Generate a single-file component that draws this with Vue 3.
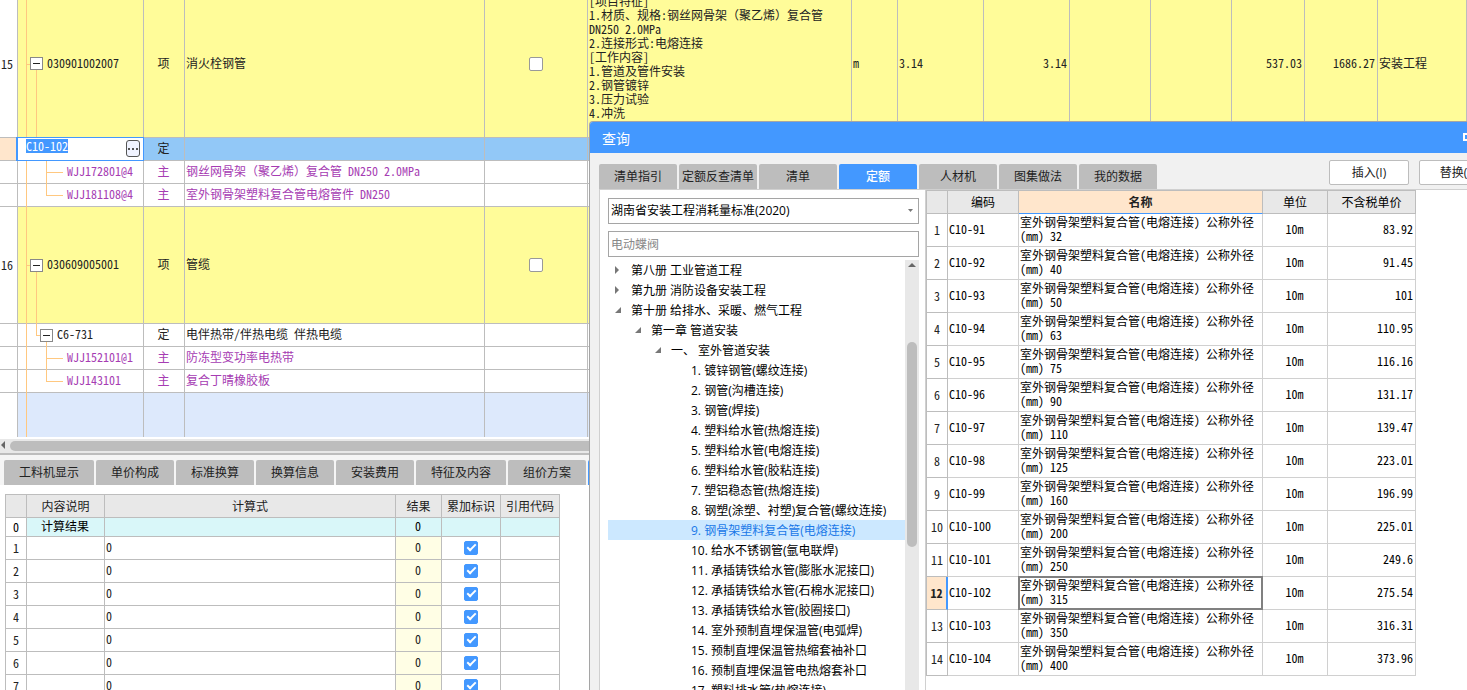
<script setup>
import { ref, onMounted } from 'vue'

const desc = [
  '[项目特征]',
  '1.材质、规格:钢丝网骨架（聚乙烯）复合管',
  'DN250 2.0MPa',
  '2.连接形式:电熔连接',
  '[工作内容]',
  '1.管道及管件安装',
  '2.钢管镀锌',
  '3.压力试验',
  '4.冲洗'
]

const rows = [
  { kind: 'item', size: 'first', no: '15', code: '030901002007', type: '项', name: '消火栓钢管', check: true, desc, unit: 'm', expr: '3.14', qty: '3.14', price: '537.03', total: '1686.27', major: '安装工程' },
  { kind: 'edit', type: '定', name: '' },
  { kind: 'mat', code: 'WJJ172801@4', type: '主', name: '钢丝网骨架（聚乙烯）复合管 DN250 2.0MPa' },
  { kind: 'mat', last: true, code: 'WJJ181108@4', type: '主', name: '室外钢骨架塑料复合管电熔管件 DN250' },
  { kind: 'item', size: 'tall', no: '16', code: '030609005001', type: '项', name: '管缆', check: true },
  { kind: 'quota', code: 'C6-731', type: '定', name: '电伴热带/伴热电缆 伴热电缆' },
  { kind: 'mat', code: 'WJJ152101@1', type: '主', name: '防冻型变功率电热带' },
  { kind: 'mat', last: true, code: 'WJJ143101', type: '主', name: '复合丁晴橡胶板' },
  { kind: 'blank', size: 'tail' }
]

// Full-width brackets keep their own width inside half-width text.
const parts = (s) => s.split(/([（）])/).filter(Boolean).map((text) => ({ text, wide: /[（）]/.test(text) }))

const detailTabs = ['工料机显示', '单价构成', '标准换算', '换算信息', '安装费用', '特征及内容', '组价方案', '工程量明细']
const queryTabs = ['清单指引', '定额反查清单', '清单', '定额', '人材机', '图集做法', '我的数据']
const activeTab = ref('定额')

const tree = [
  { level: 0, text: '第八册 工业管道工程', open: false },
  { level: 0, text: '第九册 消防设备安装工程', open: false },
  { level: 0, text: '第十册 给排水、采暖、燃气工程', open: true },
  { level: 1, text: '第一章 管道安装', open: true },
  { level: 2, text: '一、 室外管道安装', open: true },
  ...[
    '1. 镀锌钢管(螺纹连接)',
    '2. 钢管(沟槽连接)',
    '3. 钢管(焊接)',
    '4. 塑料给水管(热熔连接)',
    '5. 塑料给水管(电熔连接)',
    '6. 塑料给水管(胶粘连接)',
    '7. 塑铝稳态管(热熔连接)',
    '8. 钢塑(涂塑、衬塑)复合管(螺纹连接)',
    '9. 钢骨架塑料复合管(电熔连接)',
    '10. 给水不锈钢管(氩电联焊)',
    '11. 承插铸铁给水管(膨胀水泥接口)',
    '12. 承插铸铁给水管(石棉水泥接口)',
    '13. 承插铸铁给水管(胶圈接口)',
    '14. 室外预制直埋保温管(电弧焊)',
    '15. 预制直埋保温管热缩套袖补口',
    '16. 预制直埋保温管电热熔套补口',
    '17. 塑料排水管(热熔连接)'
  ].map((text) => ({ level: 3, text, leaf: true }))
]
const selectedNode = ref('9. 钢骨架塑料复合管(电熔连接)')

const quotas = [
  [32, '83.92'], [40, '91.45'], [50, '101'], [63, '110.95'], [75, '116.16'], [90, '131.17'], [110, '139.47'],
  [125, '223.01'], [160, '196.99'], [200, '225.01'], [250, '249.6'], [315, '275.54'], [350, '316.31'], [400, '373.96']
].map(([dia, price], i) => ({
  no: i + 1,
  code: `C10-${91 + i}`,
  name: `室外钢骨架塑料复合管(电熔连接) 公称外径(mm) ${dia}`,
  price
}))
const currentNo = 12

const codeInput = ref('C10-102')
const editor = ref(null)
const keyword = ref('')

onMounted(() => {
  const el = Array.isArray(editor.value) ? editor.value[0] : editor.value
  el?.focus({ preventScroll: true })
  el?.select()
})
</script>

<template>
  <div class="app">
    <section class="bill">
      <table class="bill-grid">
        <colgroup>
          <col class="w-no"><col class="w-code"><col class="w-type"><col class="w-name"><col class="w-check">
          <col class="w-desc"><col class="w-unit"><col class="w-expr"><col class="w-expr"><col class="w-mid">
          <col class="w-mid"><col class="w-price"><col class="w-price"><col>
        </colgroup>
        <tbody>
          <tr v-for="(r, i) in rows" :key="i" :class="[r.kind, r.size]">
            <td class="no">{{ r.no }}</td>
            <td class="code">
              <svg v-if="r.kind !== 'edit'" class="lines" aria-hidden="true">
                <line x1="8.5" y1="0" x2="8.5" y2="100%" />
                <template v-if="r.kind === 'item'">
                  <line x1="8" y1="50%" x2="13" y2="50%" />
                  <line x1="18.5" y1="50%" x2="18.5" y2="100%" />
                </template>
                <template v-if="r.kind === 'quota'">
                  <line x1="18.5" y1="0" x2="18.5" y2="50%" />
                  <line x1="18" y1="50%" x2="23" y2="50%" />
                  <line x1="28.5" y1="50%" x2="28.5" y2="100%" />
                </template>
                <template v-if="r.kind === 'mat'">
                  <line x1="28.5" y1="0" x2="28.5" :y2="r.last ? '50%' : '100%'" />
                  <line x1="28" y1="50%" x2="45" y2="50%" />
                </template>
              </svg>
              <div v-if="r.kind === 'edit'" class="editor">
                <input ref="editor" v-model="codeInput" aria-label="编码">
                <button type="button" aria-label="选择">
                  <svg width="10" height="2" viewBox="0 0 10 2"><path d="M0 0h2v2H0zM4 0h2v2H4zM8 0h2v2H8z" fill="#555" /></svg>
                </button>
              </div>
              <div v-else class="code-text">
                <button v-if="r.kind === 'item' || r.kind === 'quota'" type="button" class="toggle" aria-label="折叠">
                  <svg width="11" height="11" viewBox="0 0 11 11"><path d="M2 5h7v1H2z" fill="#222" /></svg>
                </button>
                <span>{{ r.code }}</span>
              </div>
            </td>
            <td class="center">{{ r.type }}</td>
            <td><span v-for="(p, k) in parts(r.name || '')" :key="k" :class="{ wide: p.wide }">{{ p.text }}</span></td>
            <td class="center tick"><input v-if="r.check" type="checkbox" class="box" aria-label="选中"></td>
            <td class="desc">
              <div v-for="line in r.desc" :key="line"><span v-for="(p, k) in parts(line)" :key="k" :class="{ wide: p.wide }">{{ p.text }}</span></div>
            </td>
            <td>{{ r.unit }}</td>
            <td>{{ r.expr }}</td>
            <td class="right">{{ r.qty }}</td>
            <td></td>
            <td></td>
            <td class="right">{{ r.price }}</td>
            <td class="right">{{ r.total }}</td>
            <td>{{ r.major }}</td>
          </tr>
        </tbody>
      </table>
    </section>

    <div class="hscroll">
      <svg width="10" height="12" viewBox="0 0 10 12"><path d="M5 2v8L1 6z" fill="#666" /></svg>
      <div class="hthumb"></div>
    </div>

    <nav class="detail-tabs">
      <button v-for="t in detailTabs" :key="t" type="button" class="tab" :class="{ on: t === '工程量明细' }">{{ t }}</button>
    </nav>

    <section class="detail">
      <table class="calc">
        <colgroup><col class="c-no"><col class="c-note"><col class="c-expr"><col class="c-res"><col class="c-flag"><col class="c-flag"></colgroup>
        <thead>
          <tr><th></th><th>内容说明</th><th>计算式</th><th>结果</th><th>累加标识</th><th>引用代码</th></tr>
        </thead>
        <tbody>
          <tr class="sum"><td class="center n">0</td><td class="center">计算结果</td><td></td><td class="center">0</td><td></td><td></td></tr>
          <tr v-for="n in 7" :key="n">
            <td class="center n">{{ n }}</td>
            <td></td>
            <td>0</td>
            <td class="center res">0</td>
            <td class="center tick"><input type="checkbox" class="box" checked :aria-label="`累加标识 ${n}`"></td>
            <td></td>
          </tr>
        </tbody>
      </table>
    </section>

    <section class="dialog" role="dialog" aria-label="查询">
      <header class="title">
        <span>查询</span>
        <button type="button" aria-label="最大化">
          <svg width="11" height="8" viewBox="0 0 11 8"><rect x="1" y="1" width="9" height="6" fill="none" stroke="#fff" stroke-width="2" /></svg>
        </button>
      </header>
      <div class="bar">
        <nav class="query-tabs">
          <button v-for="t in queryTabs" :key="t" type="button" class="tab" :class="{ on: t === activeTab }" @click="activeTab = t">{{ t }}</button>
        </nav>
        <div class="actions">
          <button type="button">插入(I)</button>
          <button type="button">替换(R)</button>
        </div>
      </div>
      <div class="panel">
        <aside class="side">
          <div class="select">
            <select aria-label="定额库"><option>湖南省安装工程消耗量标准(2020)</option></select>
            <svg width="7" height="4" viewBox="0 0 7 4"><path d="M1 0h5L3.500 3z" fill="#777" /></svg>
          </div>
          <input v-model="keyword" class="search" type="text" placeholder="电动蝶阀" aria-label="搜索">
          <div class="tree">
            <ul>
              <li v-for="n in tree" :key="n.text" :class="['l' + n.level, { sel: n.text === selectedNode }]" @click="selectedNode = n.text">
                <svg v-if="!n.leaf" width="8" height="10" viewBox="0 0 8 10">
                  <path v-if="n.open" d="M7 2v6H1z" fill="#777" />
                  <path v-else d="M1 1v8l4-4z" fill="#777" />
                </svg>
                <i v-else></i>
                <span>{{ n.text }}</span>
              </li>
            </ul>
            <div class="vscroll">
              <svg width="8" height="4" viewBox="0 0 8 4"><path d="M0 4L4 0l4 4z" fill="#666" /></svg>
              <div class="vthumb"></div>
            </div>
          </div>
        </aside>
        <div class="result">
          <table class="quota-grid">
            <colgroup><col class="q-no"><col class="q-code"><col class="q-name"><col class="q-unit"><col class="q-price"></colgroup>
            <thead>
              <tr><th></th><th>编码</th><th class="hot">名称</th><th>单位</th><th>不含税单价</th></tr>
            </thead>
            <tbody>
              <tr v-for="q in quotas" :key="q.no" :class="{ cur: q.no === currentNo }">
                <td class="center n">{{ q.no }}</td>
                <td>{{ q.code }}</td>
                <td class="nm">{{ q.name }}</td>
                <td class="center">10m</td>
                <td class="right">{{ q.price }}</td>
              </tr>
            </tbody>
          </table>
        </div>
      </div>
    </section>
  </div>
</template>

<style>
html, body { margin: 0; overflow: hidden; }
</style>

<style scoped>
.app {
  position: relative;
  display: flex;
  flex-direction: column;
  height: 100vh;
  overflow: hidden;
  background: #fff;
  color: #222;
  font: 12px/14px "Open Sans", "Noto Sans CJK SC", sans-serif;
}
button, input, select { font: inherit; color: inherit; margin: 0; padding: 0; box-sizing: border-box; }
table { border-collapse: separate; border-spacing: 0; table-layout: fixed; }
td, th { padding: 0 2px 2px 1px; font-weight: 400; text-align: left; vertical-align: middle; border: 0 solid #bdbdbd; border-width: 0 1px 1px 0; }
th { padding: 0 1px; }
td.tick { padding: 0; }
.bill-grid, .calc, .quota-grid { font-family: "Noto Sans CJK SC", sans-serif; font-feature-settings: "hwid"; }
.wide { font-feature-settings: normal; }
td.center, th { text-align: center; }
td.right { text-align: right; }

.bill { flex: none; overflow: hidden; }
.bill-grid { width: 100%; margin-top: -10px; white-space: nowrap; }
.w-no { width: 18px; }
.w-code { width: 126px; }
.w-type { width: 41px; }
.w-name { width: 300px; }
.w-check { width: 103px; }
.w-desc { width: 264px; }
.w-unit { width: 46px; }
.w-expr { width: 86px; }
.w-mid { width: 81px; }
.w-price { width: 73px; }
.bill-grid tr { height: 23px; }
.bill-grid tr.first { height: 148px; }
.bill-grid tr.tall { height: 117px; }
.bill-grid tr.tail { height: 44px; }
.tail td { border-bottom: 0; }
.item td { background: #fffc99; }
.blank td { background: #dde9fc; }
.edit td { background: #92c8f7; }
.bill-grid td.no { background: #fff; padding: 0 0 0 1px; }
.bill-grid .edit td.no { background: #ffe6cc; }
.mat td { color: #a63cb3; }
.bill-grid td.desc { vertical-align: top; padding-top: 4px; }
.code { position: relative; }
.bill-grid td.code { padding: 0; }
.lines { position: absolute; left: 0; top: 0; width: 100%; height: calc(100% + 1px); stroke: #ffc880; shape-rendering: crispEdges; }
.code-text { position: relative; display: flex; align-items: center; gap: 4px; }
.code-text span { padding-bottom: 2px; }
.item .code-text { padding-left: 12px; }
.quota .code-text { padding-left: 22px; }
.mat .code-text { padding-left: 49px; }
.toggle { display: block; width: 13px; height: 13px; border: 1px solid #888; background: #fff; }
.toggle svg { display: block; }
.editor { position: absolute; inset: -1px -1px -1px -2px; display: flex; align-items: flex-start; border: 1px solid #4398ff; border-left-width: 2px; background: #fff; }
.editor input { flex: 1; min-width: 0; height: 14px; margin: 1px 0 0 8px; border: 0; outline: 0; background: none; font-feature-settings: "hwid"; }
.editor input::selection { background: #4398ff; color: #fff; }
.editor button { width: 14px; height: 17px; margin: 2px 3px 0 0; display: flex; align-items: center; justify-content: center; border: 1px solid #555; border-radius: 3px; background: #f0f3ff; }

.box { appearance: none; display: block; width: 14px; height: 14px; margin: 0 auto; border: 1px solid #999; border-radius: 2px; background: #fff; }
.box:checked { border-color: #4398ff; background: #4398ff; }
.box:checked::after { content: ""; display: block; width: 3px; height: 7px; margin: 0 0 0 4px; border: solid #fff; border-width: 0 2px 2px 0; transform: rotate(45deg); }

.hscroll { flex: none; display: flex; height: 14px; margin-top: 2px; background: #e8e8e8; border-bottom: 2px solid #bdbdbd; }
.hthumb { flex: 1; height: 10px; margin-top: 2px; border-radius: 5px 0 0 5px; background: #bdbdbd; }

.tab { height: 25px; border: 0; border-radius: 2px 2px 0 0; background: #bdbdbd; white-space: nowrap; }
.tab.on { background: #4398ff; color: #fff; font-weight: 500; }
.detail-tabs { flex: none; display: flex; gap: 2px; padding: 5px 4px 0; background: #f5f5f5; }
.detail-tabs .tab { padding: 0 15px; }
.detail { flex: 1; min-height: 0; overflow: hidden; padding: 9px 5px 0; }
.calc { width: 555px; border: 1px solid #bdbdbd; border-width: 1px 0 0 1px; }
.c-no { width: 21px; }
.c-note { width: 78px; }
.c-res { width: 46px; }
.c-flag { width: 59px; }
.calc tr { height: 23px; }
.calc tr.sum { height: 19px; color: #000; }
.calc th, .quota-grid th { background: #e8e8e8; }
.calc .sum td { background: #d9f7f9; }
.calc td.n { padding: 0; }
.calc .sum td.n { background: #fff; }
.calc td.res { background: #fffee5; }

.dialog { position: absolute; left: 589px; right: -80px; top: 121px; bottom: 0; display: flex; flex-direction: column; overflow: hidden; border: 1px solid #a5a5a5; border-bottom: 0; border-radius: 4px 4px 0 0; background: #f1f1f1; }
.title { flex: none; display: flex; align-items: center; justify-content: space-between; height: 31px; padding: 0 72px 0 12px; background: #4398ff; color: #fff; font-size: 14px; }
.title span { padding-top: 2px; }
.title button { display: block; border: 0; background: none; }
.title svg { display: block; margin-bottom: 2px; }
.bar { flex: none; display: flex; align-items: flex-end; justify-content: space-between; height: 36px; padding: 0 47px 0 9px; }
.query-tabs { display: flex; gap: 2px; }
.query-tabs .tab { width: 78px; }
.actions { display: flex; gap: 10px; padding-bottom: 4px; }
.actions button { width: 80px; height: 25px; border: 1px solid #bdbdbd; border-radius: 2px; background: #fff; }
.panel { flex: 1; min-height: 0; display: flex; margin-left: 9px; border: 1px solid #d0d0d0; border-width: 1px 0 0 1px; background: #fff; color: #000; }
.side { flex: none; width: 325px; box-sizing: border-box; display: flex; flex-direction: column; padding: 8px 6px 0 8px; }
.select { position: relative; display: flex; margin-bottom: 7px; }
.select select { appearance: none; width: 100%; height: 26px; padding: 0 2px; border: 1px solid #a5a5a5; border-radius: 0; background: #fff; }
.select svg { position: absolute; right: 5px; top: 11px; }
.search { height: 26px; padding: 0 2px; border: 1px solid #a5a5a5; outline: 0; background: #fff; }
.search::placeholder { color: #888; opacity: 1; }
.tree { flex: 1; min-height: 0; display: flex; margin-top: 3px; overflow: hidden; }
.tree ul { flex: 1; margin: 0; padding: 0; list-style: none; }
.tree li { display: flex; align-items: center; gap: 9px; height: 20px; padding-left: 6px; white-space: nowrap; }
.tree li span { padding-top: 2px; }
.tree li i { width: 8px; }
.tree li.l1 { padding-left: 26px; }
.tree li.l2 { padding-left: 46px; }
.tree li.l3 { padding-left: 66px; }
.tree li.sel { background: #cce8ff; color: #1a78e8; }
.vscroll { width: 14px; background: #e8e8e8; display: flex; flex-direction: column; align-items: center; }
.vscroll svg { margin: 3px 0 75px; }
.vthumb { width: 10px; height: 205px; border-radius: 5px; background: #bdbdbd; }

.result { flex: 1; min-width: 0; overflow: hidden; border-left: 1px solid #d0d0d0; }
.quota-grid { width: 490px; border: 1px solid #bdbdbd; border-width: 1px 0 0 1px; }
.q-no { width: 21px; }
.q-code { width: 71px; }
.q-unit { width: 65px; }
.q-price { width: 88px; }
.quota-grid thead tr { height: 23px; }
.quota-grid th.hot { background: #ffe6cc; font-weight: 700; border-bottom-color: #4398ff; color: #222; }
.quota-grid tbody tr { height: 33px; }
.quota-grid td { border-color: #d0d0d0; }
.quota-grid td.n { border-color: #bdbdbd; color: #222; padding: 0; }
.quota-grid .cur td.n { background: #ffe6cc; font-weight: 700; border-right: 2px solid #4398ff; }
.quota-grid .cur td.nm { position: relative; }
.quota-grid .cur td.nm::after { content: ""; position: absolute; inset: -1px; border: 2px solid #808080; }
</style>
